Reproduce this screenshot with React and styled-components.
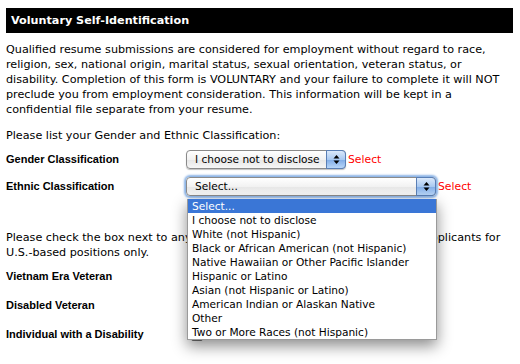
import React from 'react';
import styled, { createGlobalStyle } from 'styled-components';

const Global = createGlobalStyle`
  html, body { margin: 0; padding: 0; background: #fff; }
  body { width: 520px; height: 364px; overflow: hidden; }
`;

const Page = styled.div`
  position: relative;
  padding: 8px 7px 0 6px;
  font-family: "DejaVu Sans", Verdana, sans-serif;
  font-size: 11.2px;
  color: #000;
`;

const Header = styled.div`
  background: #000;
  color: #fff;
  font-weight: bold;
  font-size: 11.2px;
  height: 25px;
  line-height: 25px;
  padding-left: 5px;
`;

const Para = styled.p`
  margin: ${(p) => p.$top || 0}px 0 0 0;
  line-height: 15px;
`;

const Form = styled.div`
  display: grid;
  grid-template-columns: 180px 1fr;
  row-gap: ${(p) => p.$gap || 9}px;
  margin-top: ${(p) => p.$top || 0}px;
  align-items: center;
`;

const Label = styled.div`
  font-family: "Liberation Sans", Arial, sans-serif;
  font-weight: bold;
  font-size: 11px;
  height: 19px;
  line-height: 19px;
`;

const Field = styled.div`
  display: flex;
  align-items: center;
  height: 19px;
`;

const SelectBox = styled.div`
  position: relative;
  width: ${(p) => p.$w}px;
  height: 19px;
  box-sizing: border-box;
  border: 1px solid #8a8a8a;
  border-radius: 4px;
  background: linear-gradient(#ffffff, #f2f2f2 50%, #e6e6e6 51%, #f6f6f6);
  font-family: "DejaVu Sans", "Lucida Grande", sans-serif;
  font-size: 10.6px;
  line-height: 17px;
  padding-left: 8px;
  box-shadow: ${(p) => (p.$focus ? '0 0 2px 2px #8cb4e6' : '0 1px 1px rgba(0,0,0,0.25)')};
`;

const ArrowButton = styled.div`
  position: absolute;
  top: -1px;
  right: -1px;
  bottom: -1px;
  width: 18px;
  border: 1px solid #5a7fb5;
  border-radius: 0 4px 4px 0;
  background: linear-gradient(#dbe9fb, #a9c9f1 50%, #7fabe6 51%, #b8d6f8);
  display: flex;
  align-items: center;
  justify-content: center;
`;

const Warn = styled.span`
  color: #ff0000;
  font-family: "DejaVu Sans", "Lucida Grande", sans-serif;
  font-size: 10.8px;
  margin-left: 2px;
`;

const Checkbox = styled.div`
  width: 10px;
  height: 11px;
  border: 1px solid #777;
  border-radius: 2px;
  background: linear-gradient(#fff, #e8e8e8);
  margin-left: 5px;
`;

const Dropdown = styled.ul`
  position: absolute;
  left: 187px;
  top: 199px;
  width: 250px;
  margin: 0;
  padding: 0;
  list-style: none;
  background: #fff;
  border: 1px solid #9a9a9a;
  border-top: none;
  box-sizing: border-box;
  box-shadow: 0 6px 14px rgba(0, 0, 0, 0.45);
  font-family: "DejaVu Sans", "Lucida Grande", sans-serif;
  font-size: 10.6px;
`;

const Option = styled.li`
  height: 14px;
  line-height: 14px;
  padding-left: 4px;
  white-space: nowrap;
  background: ${(p) => (p.$active ? '#3a76d6' : 'transparent')};
  color: ${(p) => (p.$active ? '#fff' : '#000')};
`;

const Arrows = () => (
  <svg width="7" height="11" viewBox="0 0 7 11">
    <path d="M3.5 1 L6.5 4.5 L0.5 4.5 Z" fill="#000" />
    <path d="M3.5 10 L6.5 6.5 L0.5 6.5 Z" fill="#000" />
  </svg>
);

const options = [
  'Select...',
  'I choose not to disclose',
  'White (not Hispanic)',
  'Black or African American (not Hispanic)',
  'Native Hawaiian or Other Pacific Islander',
  'Hispanic or Latino',
  'Asian (not Hispanic or Latino)',
  'American Indian or Alaskan Native',
  'Other',
  'Two or More Races (not Hispanic)',
];

const App = () => (
  <Page>
    <Global />
    <Header>Voluntary Self-Identification</Header>
    <Para $top={9}>
      Qualified resume submissions are considered for employment without regard to race,
      religion, sex, national origin, marital status, sexual orientation, veteran status, or
      disability. Completion of this form is VOLUNTARY and your failure to complete it will NOT
      preclude you from employment consideration. This information will be kept in a
      confidential file separate from your resume.
    </Para>
    <Para $top={11}>Please list your Gender and Ethnic Classification:</Para>
    <Form $top={7} $gap={8}>
      <Label>Gender Classification</Label>
      <Field>
        <SelectBox $w={160}>
          I choose not to disclose
          <ArrowButton><Arrows /></ArrowButton>
        </SelectBox>
        <Warn>Select</Warn>
      </Field>
      <Label>Ethnic Classification</Label>
      <Field>
        <SelectBox $w={250} $focus>
          Select...
          <ArrowButton><Arrows /></ArrowButton>
        </SelectBox>
        <Warn>Select</Warn>
      </Field>
    </Form>
    <Para $top={34}>
      Please check the box next to any of the following items that apply to you. Applicants for
      U.S.-based positions only.
    </Para>
    <Form $top={7} $gap={10}>
      <Label>Vietnam Era Veteran</Label>
      <Field><Checkbox /></Field>
      <Label>Disabled Veteran</Label>
      <Field><Checkbox /></Field>
      <Label>Individual with a Disability</Label>
      <Field><Checkbox /></Field>
    </Form>
    <Dropdown>
      {options.map((o, i) => (
        <Option key={o} $active={i === 0}>{o}</Option>
      ))}
    </Dropdown>
  </Page>
);

export default App;
